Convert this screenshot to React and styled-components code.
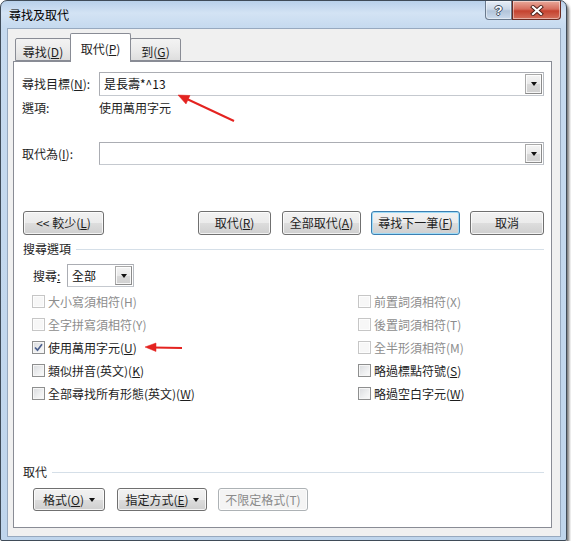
import React from 'react'
import styled, { createGlobalStyle } from 'styled-components'

const GlobalStyle = createGlobalStyle`
  html, body {
    margin: 0;
    padding: 0;
    background: #fff;
  }
  body {
    font-family: "Noto Sans CJK TC", "Liberation Sans", sans-serif;
    font-size: 12px;
    line-height: 16px;
    color: #1e1e1e;
  }
  u {
    text-decoration: underline;
    text-underline-offset: 1px;
  }
`

const Window = styled.div`
  position: relative;
  box-sizing: border-box;
  width: 567px;
  height: 541px;
  display: flex;
  flex-direction: column;
  padding: 0 5px 3px 6px;
  border: 1px solid #3f4b58;
  border-radius: 7px 7px 2px 2px;
  background: linear-gradient(180deg, #b8d0ea 0px, #d3e3f4 12px, #c6daef 26px, #bfd5ec 100%);
  box-shadow: 2px 3px 3px rgba(0, 0, 0, 0.55);
`

const TitleBar = styled.div`
  height: 27px;
  display: flex;
  justify-content: space-between;
  align-items: flex-start;
`

const Title = styled.div`
  margin-top: 6px;
  padding-left: 2px;
  color: #000;
`

const Captions = styled.div`
  display: flex;
  height: 19px;
`

const CaptionButton = styled.div`
  box-sizing: border-box;
  width: ${p => p.$w}px;
  height: 19px;
  display: flex;
  align-items: center;
  justify-content: center;
  border: 1px solid ${p => (p.$close ? '#6b2b22' : '#6a7a8d')};
  border-top: none;
  border-radius: ${p => (p.$close ? '0 0 4px 0' : '0 0 0 4px')};
  background: ${p => (p.$close
    ? 'linear-gradient(180deg, #e9a99b 0%, #d66e5e 45%, #c5422f 55%, #d4705c 100%)'
    : 'linear-gradient(180deg, #e6eef7 0%, #cbd8e7 45%, #b2c4d9 55%, #cbdbed 100%)')};
  box-shadow: inset 0 0 0 1px rgba(255, 255, 255, 0.45);
`

const HelpGlyph = styled.span`
  font-family: "Liberation Sans", sans-serif;
  font-weight: bold;
  font-size: 13px;
  line-height: 13px;
  color: #fff;
  text-shadow: 1px 0 0 #3b4c60, -1px 0 0 #3b4c60, 0 1px 0 #3b4c60, 0 -1px 0 #3b4c60;
`

const Client = styled.div`
  flex: 1;
  display: flex;
  flex-direction: column;
  border: 1px solid #97a9bf;
  background: #f0f0f0;
  padding: 4px 8px 8px 5px;
`

const TabStrip = styled.div`
  display: flex;
  align-items: flex-end;
  height: 28px;
  padding-left: 2px;
`

const Tab = styled.div`
  position: relative;
  box-sizing: border-box;
  width: ${p => p.$w}px;
  height: ${p => (p.$active ? 29 : 23)}px;
  margin-left: ${p => (p.$first ? 0 : -1)}px;
  margin-bottom: ${p => (p.$active ? -1 : 0)}px;
  z-index: ${p => (p.$active ? 2 : 1)};
  padding-top: ${p => (p.$active ? 7 : 5)}px;
  text-align: center;
  border: 1px solid #898c95;
  border-bottom: ${p => (p.$active ? 'none' : '1px solid #898c95')};
  border-radius: 2px 2px 0 0;
  background: ${p => (p.$active ? '#fff' : 'linear-gradient(180deg, #f3f3f3 0%, #ebebeb 50%, #dedede 100%)')};
`

const Panel = styled.div`
  flex: 1;
  display: flex;
  flex-direction: column;
  border: 1px solid #898c95;
  background: #fff;
  padding: 0 7px 0 8px;
`

const FieldRow = styled.div`
  display: flex;
  align-items: center;
  height: ${p => p.$h || 24}px;
  margin-top: ${p => p.$mt}px;
`

const Label = styled.div`
  box-sizing: border-box;
  width: ${p => p.$w || 77}px;
  padding-left: ${p => p.$pl || 0}px;
  flex-shrink: 0;
`

const Combo = styled.div`
  box-sizing: border-box;
  flex: ${p => (p.$w ? 'none' : 1)};
  width: ${p => (p.$w ? `${p.$w}px` : 'auto')};
  height: 100%;
  display: flex;
  align-items: center;
  padding: 1px 1px 1px 4px;
  border: 1px solid #abadb3;
  border-right-color: #b8bcc2;
  border-bottom-color: #c5c9cf;
  background: #fff;
`

const ComboText = styled.div`
  flex: 1;
  color: #111;
`

const DropButton = styled.div`
  box-sizing: border-box;
  width: 17px;
  height: 100%;
  display: flex;
  align-items: center;
  justify-content: center;
  border: 1px solid #8b8b8b;
  border-top-color: #a9a9a9;
  border-left-color: #a9a9a9;
  background: linear-gradient(180deg, #f4f4f4 0%, #e9e9e9 50%, #d9d9d9 51%, #d0d0d0 100%);
  box-shadow: inset 0 0 0 1px rgba(255, 255, 255, 0.8);
`

const Triangle = styled.span`
  width: 0;
  height: 0;
  border-left: 3.5px solid transparent;
  border-right: 3.5px solid transparent;
  border-top: 4px solid #111;
  margin-left: ${p => p.$ml || 0}px;
`

const InfoRow = styled.div`
  display: flex;
  height: 16px;
  margin-top: 4px;
`

const ButtonRow = styled.div`
  display: flex;
  align-items: center;
  height: ${p => p.$h}px;
  margin-top: ${p => p.$mt}px;
  padding-left: ${p => p.$pl}px;
`

const Spacer = styled.div`
  flex: 1;
`

const Button = styled.div`
  box-sizing: border-box;
  width: ${p => p.$w}px;
  height: 100%;
  margin-left: ${p => p.$ml || 0}px;
  display: flex;
  align-items: center;
  justify-content: center;
  border: 1px solid ${p => (p.$disabled ? '#adb2b5' : p.$default ? '#3c7fb1' : '#707070')};
  border-radius: 3px;
  color: ${p => (p.$disabled ? '#8a8a8a' : '#1e1e1e')};
  background: ${p => (p.$disabled
    ? '#f4f4f4'
    : 'linear-gradient(180deg, #f2f2f2 0%, #ebebeb 50%, #dddddd 51%, #cfcfcf 100%)')};
  box-shadow: ${p => (p.$default
    ? 'inset 0 0 0 1px #9fdcf8'
    : 'inset 0 0 0 1px rgba(255, 255, 255, 0.75)')};
`

const SectionHeader = styled.div`
  display: flex;
  align-items: center;
  height: 16px;
  margin-top: ${p => p.$mt}px;
  padding-left: 1px;

  &::after {
    content: "";
    flex: 1;
    height: 1px;
    margin-left: 5px;
    background: #d5dfe8;
  }
`

const CheckGrid = styled.div`
  display: grid;
  grid-template-columns: 326px 1fr;
  grid-auto-rows: 23px;
  margin-top: 3px;
  padding-left: 10px;
`

const CheckItem = styled.div`
  display: flex;
  align-items: center;
  gap: 3px;
  color: ${p => (p.$disabled ? '#8d8d8d' : '#1e1e1e')};
`

const Box = styled.div`
  box-sizing: border-box;
  width: 13px;
  height: 13px;
  display: flex;
  align-items: center;
  justify-content: center;
  border: 1px solid ${p => (p.$disabled ? '#c6c6c6' : '#8e8f8f')};
  background: ${p => (p.$disabled
    ? '#f7f7f7'
    : 'linear-gradient(135deg, #d9dbde 0%, #eff0f1 60%, #fbfbfb 100%)')};
  box-shadow: inset 0 0 0 1px ${p => (p.$disabled ? '#fdfdfd' : '#f6f6f6')};
`

const Overlay = styled.svg`
  position: absolute;
  left: -1px;
  top: -1px;
  pointer-events: none;
`

function Check ({ label, checked, disabled }) {
  return (
    <CheckItem $disabled={disabled}>
      <Box $disabled={disabled}>
        {checked && (
          <svg width="9" height="9" viewBox="0 0 9 9">
            <path d="M1 4.5 L3.5 7.2 L8 1.2" fill="none" stroke="#4b5f8e" strokeWidth="1.7"/>
          </svg>
        )}
      </Box>
      <span>{label}</span>
    </CheckItem>
  )
}

const checks = [
  { label: '大小寫須相符(H)', disabled: true },
  { label: '前置詞須相符(X)', disabled: true },
  { label: '全字拼寫須相符(Y)', disabled: true },
  { label: '後置詞須相符(T)', disabled: true },
  { label: <>使用萬用字元(<u>U</u>)</>, checked: true },
  { label: '全半形須相符(M)', disabled: true },
  { label: <>類似拼音(英文)(<u>K</u>)</> },
  { label: <>略過標點符號(<u>S</u>)</> },
  { label: <>全部尋找所有形態(英文)(<u>W</u>)</> },
  { label: <>略過空白字元(<u>W</u>)</> },
]

export default function App () {
  return (
    <>
      <GlobalStyle/>
      <Window>
        <TitleBar>
          <Title>尋找及取代</Title>
          <Captions>
            <CaptionButton $w={27}><HelpGlyph>?</HelpGlyph></CaptionButton>
            <CaptionButton $w={49} $close>
              <svg width="14" height="11" viewBox="0 0 14 11">
                <path d="M3 2 L11 9 M11 2 L3 9" stroke="#4a1e18" strokeWidth="4" strokeLinecap="square"/>
                <path d="M3 2 L11 9 M11 2 L3 9" stroke="#fff" strokeWidth="2.2" strokeLinecap="square"/>
              </svg>
            </CaptionButton>
          </Captions>
        </TitleBar>

        <Client>
          <TabStrip>
            <Tab $w={56} $first>尋找(<u>D</u>)</Tab>
            <Tab $w={61} $active>取代(<u>P</u>)</Tab>
            <Tab $w={51}>到(<u>G</u>)</Tab>
          </TabStrip>

          <Panel>
            <FieldRow $mt={10}>
              <Label>尋找目標(<u>N</u>):</Label>
              <Combo>
                <ComboText>是長壽*^13</ComboText>
                <DropButton><Triangle/></DropButton>
              </Combo>
            </FieldRow>

            <InfoRow>
              <Label>選項:</Label>
              <span>使用萬用字元</span>
            </InfoRow>

            <FieldRow $mt={26} $h={23}>
              <Label>取代為(<u>I</u>):</Label>
              <Combo>
                <ComboText/>
                <DropButton><Triangle/></DropButton>
              </Combo>
            </FieldRow>

            <ButtonRow $mt={46} $h={24} $pl={1}>
              <Button $w={81}><span>&lt;&lt; 較少(<u>L</u>)</span></Button>
              <Spacer/>
              <Button $w={73}><span>取代(<u>R</u>)</span></Button>
              <Button $w={79} $ml={11}><span>全部取代(<u>A</u>)</span></Button>
              <Button $w={89} $ml={10} $default><span>尋找下一筆(<u>F</u>)</span></Button>
              <Button $w={74} $ml={10}><span>取消</span></Button>
            </ButtonRow>

            <SectionHeader $mt={6}>搜尋選項</SectionHeader>

            <FieldRow $mt={7} $h={23}>
              <Label $w={45} $pl={11}>搜尋<u>:</u></Label>
              <Combo $w={67}>
                <ComboText>全部</ComboText>
                <DropButton><Triangle/></DropButton>
              </Combo>
            </FieldRow>

            <CheckGrid>
              {checks.map((c, i) => <Check key={i} {...c}/>)}
            </CheckGrid>

            <SectionHeader $mt={59}>取代</SectionHeader>

            <ButtonRow $mt={8} $h={23} $pl={11}>
              <Button $w={72}><span>格式(<u>O</u>)</span><Triangle $ml={5}/></Button>
              <Button $w={90} $ml={12}><span>指定方式(<u>E</u>)</span><Triangle $ml={4}/></Button>
              <Button $w={90} $ml={11} $disabled><span>不限定格式(T)</span></Button>
            </ButtonRow>
          </Panel>
        </Client>

        <Overlay width="567" height="541" viewBox="0 0 567 541">
          <g stroke="#e42320" strokeWidth="2" fill="#e42320">
            <line x1="234" y1="121" x2="187" y2="99"/>
            <polygon points="178,95 190,95.5 186,104" strokeWidth="0.5"/>
            <line x1="182" y1="348" x2="153" y2="347.5"/>
            <polygon points="145,347 156,343 156,351.5" strokeWidth="0.5"/>
          </g>
        </Overlay>
      </Window>
    </>
  )
}
